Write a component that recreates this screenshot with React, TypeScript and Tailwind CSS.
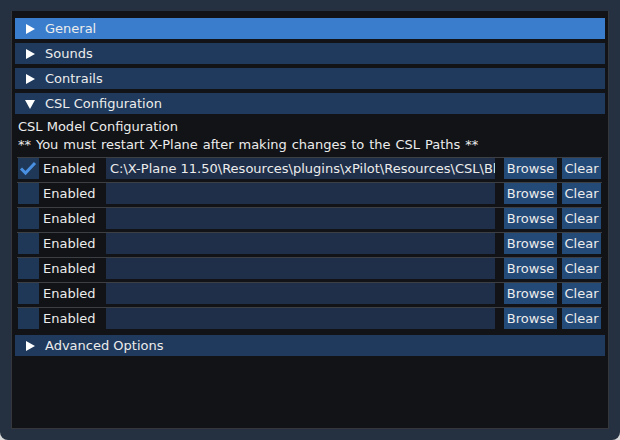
import React from "react";

const Tri = ({ down }: { down?: boolean }) => (
  <svg width="10" height="10" viewBox="0 0 10 10" className="shrink-0">
    {down ? <polygon points="0,1 10,1 5,10" fill="#ffffff" /> : <polygon points="1,0 10,5 1,10" fill="#ffffff" />}
  </svg>
);

const Header = ({ label, active, down }: { label: string; active?: boolean; down?: boolean }) => (
  <div className={`h-[21px] flex items-center pl-[10px] gap-[10px] ${active ? "bg-[#3a7dcd]" : "bg-[#1f3a5d]"}`}>
    <Tri down={down} />
    <span>{label}</span>
  </div>
);

const Row = ({ checked, path }: { checked?: boolean; path?: string }) => (
  <div className="flex flex-col">
    <div className="h-px bg-[#3c4045] ml-[2px] mr-[3px]" />
    <div className="flex h-[21px] items-stretch">
      <div className="w-[21px] ml-[3px] bg-[#1f3858] relative">
        {checked && (
          <svg width="21" height="21" viewBox="0 0 21 21" className="absolute left-0 top-0">
            <polyline points="3,10.5 7.5,15 17,5" fill="none" stroke="#4a90e2" strokeWidth="3" />
          </svg>
        )}
      </div>
      <div className="w-[67px] pl-[4px] flex items-center">Enabled</div>
      <div className="w-[389px] bg-[#1f2f49] flex items-center pl-[4px] overflow-hidden whitespace-nowrap">{path}</div>
      <div className="w-[53px] ml-[9px] bg-[#244a78] flex items-center justify-center">Browse</div>
      <div className="w-[39px] ml-[5px] bg-[#244a78] flex items-center justify-center">Clear</div>
    </div>
    <div className="h-[3px]" />
  </div>
);

export default function App() {
  return (
    <div className="w-[620px] h-[440px] bg-[#d9d9d9]" style={{ fontFamily: "'DejaVu Sans', sans-serif" }}>
      <div className="w-[620px] h-[440px] bg-[#253140] rounded-b-[8px] pt-[11px] pl-[11px]">
        <div className="w-[598px] h-[418px] bg-[#111316] border-l border-r border-b border-[#34383d] text-[13px] text-[#ececec] pt-[7px] px-[3px] leading-none">
          <div className="flex flex-col gap-[4px] w-[590px]">
            <Header label="General" active />
            <Header label="Sounds" />
            <Header label="Contrails" />
            <Header label="CSL Configuration" down />
          </div>
          <div className="w-[590px] pt-[3px]">
            <div className="h-[18px] flex items-center pl-[3px]">CSL Model Configuration</div>
            <div className="h-[18px] flex items-center pl-[3px] [word-spacing:0.8px]">** You must restart X-Plane after making changes to the CSL Paths **</div>
            <div className="h-[4px]" />
            <Row checked path="C:\X-Plane 11.50\Resources\plugins\xPilot\Resources\CSL\Bl" />
            <Row />
            <Row />
            <Row />
            <Row />
            <Row />
            <Row />
            <div className="h-[3px]" />
            <Header label="Advanced Options" />
          </div>
        </div>
      </div>
    </div>
  );
}
